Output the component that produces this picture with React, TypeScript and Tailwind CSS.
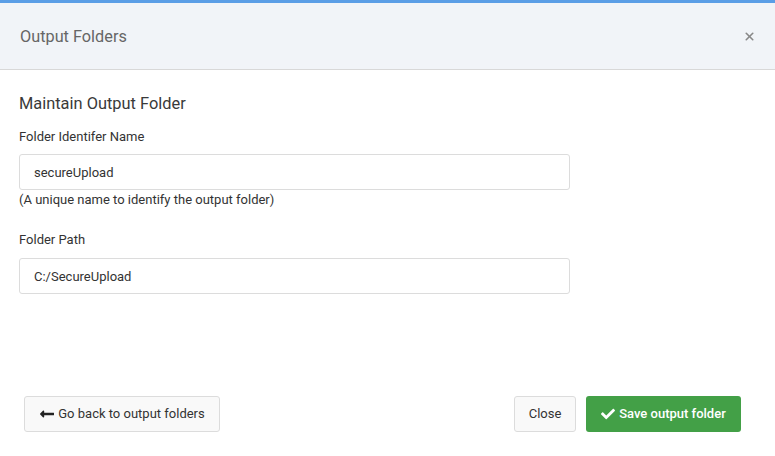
import { X } from 'lucide-react'
import { FaCheck, FaLongArrowAltLeft } from 'react-icons/fa'

export default function App() {
  return (
    <div className="w-[775px] h-[456px] bg-white flex flex-col font-['Roboto',sans-serif] border-t-[3px] border-[#5a9ee6]">
      {/* header */}
      <div className="h-[67px] bg-[#f1f4f8] border-b border-[#d8d8d8] flex items-center justify-between pl-5 pr-[19px]">
        <h1 className="text-[16.3px] text-[#666] pt-[3px]">Output Folders</h1>
        <X className="w-[13px] h-[13px] text-[#888] mt-[1px]" strokeWidth={3} />
      </div>

      {/* body */}
      <div className="flex-1 flex flex-col px-[19px] pt-[24px]">
        <h2 className="text-[16.4px] text-[#3a3a3a] leading-5">Maintain Output Folder</h2>

        <label className="mt-[15px] text-[13px] text-[#333] leading-4">Folder Identifer Name</label>
        <input
          className="mt-[9px] w-[551px] h-[36px] border border-[#dcdcdc] rounded-[3px] px-[14px] text-[13px] text-[#333] outline-none"
          defaultValue="secureUpload"
          readOnly
        />
        <p className="text-[13px] text-[#333] leading-4 mt-[2px]">(A unique name to identify the output folder)</p>

        <label className="mt-[24px] text-[13px] text-[#333] leading-4">Folder Path</label>
        <input
          className="mt-[10px] w-[551px] h-[36px] border border-[#dcdcdc] rounded-[3px] px-[14px] text-[13px] text-[#333] outline-none"
          defaultValue="C:/SecureUpload"
          readOnly
        />

        <div className="mt-auto mb-[24px] flex items-center justify-between pl-[5px] pr-[15px]">
          <button className="h-[36px] w-[196px] flex items-center justify-center gap-[3px] border border-[#dcdcdc] rounded-[3px] bg-[#f9f9f9] text-[13px] text-[#333]">
            <FaLongArrowAltLeft className="w-[16px] h-[16px] text-[#222]" />
            Go back to output folders
          </button>
          <div className="flex items-center gap-[10px]">
            <button className="h-[36px] w-[62px] border border-[#dcdcdc] rounded-[3px] bg-[#f9f9f9] text-[13px] text-[#333]">
              Close
            </button>
            <button className="h-[36px] w-[155px] flex items-center justify-center gap-[4px] rounded-[3px] bg-[#43a047] text-[13px] font-medium text-white">
              <FaCheck className="w-[14px] h-[14px]" />
              Save output folder
            </button>
          </div>
        </div>
      </div>
    </div>
  )
}
